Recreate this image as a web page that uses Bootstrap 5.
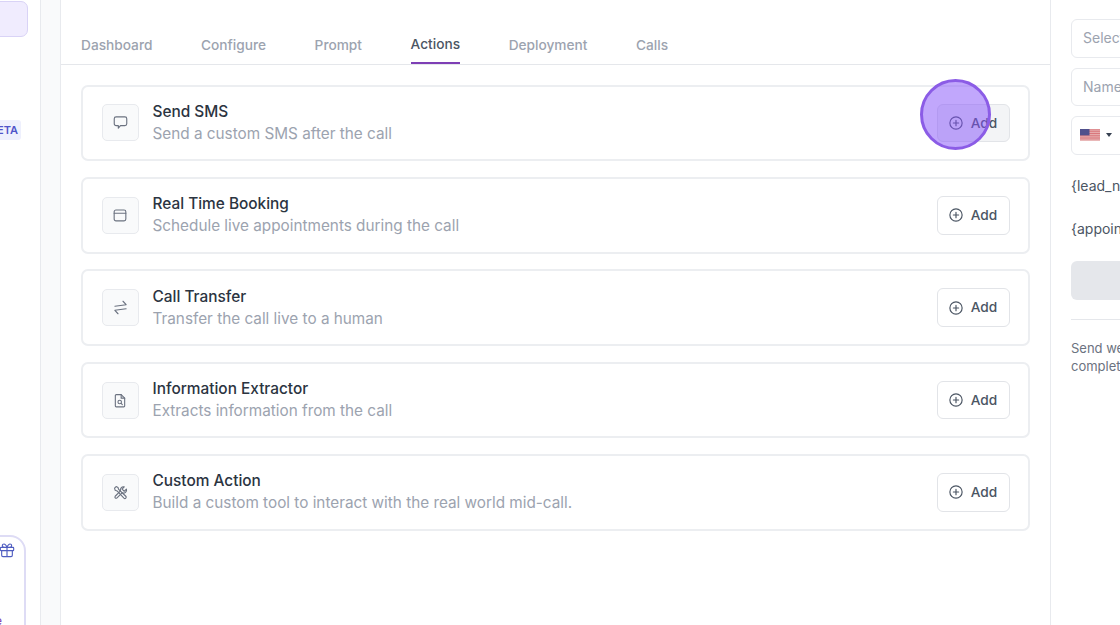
<!DOCTYPE html>
<html lang="en">
<head>
<meta charset="utf-8">
<title>Actions</title>
<link href="https://cdn.jsdelivr.net/npm/bootstrap@5.3.0/dist/css/bootstrap.min.css" rel="stylesheet">
<style>
html,body{height:625px;overflow:hidden;background:#fff}
body{font-family:Inter,"Liberation Sans",sans-serif;color:#374151}
.shell{height:625px;width:1120px;position:relative;overflow:hidden}
.side{width:41px;border-right:1px solid #e8eaee;overflow:hidden;flex:none}
.side-inner{width:200px;margin-left:-160px;height:625px}
.side-sel{height:36px;margin:1px 12px 0 0;background:#f0ecfe;border:1px solid #d9d3f6;border-radius:7px}
.side-beta{margin:83px 19px 0 0;background:#eef0fd;color:#4f55c9;font-size:11px;font-weight:600;line-height:20px;padding:0 3px;border-radius:3px;align-self:flex-end}
.side-gift{height:120px;margin:auto 14px -30px 0;border:2px solid #dedcf5;border-radius:16px;padding:4px 10px;position:relative;font-size:11px;line-height:14px;color:#374151;text-align:right}
.side-gift svg{display:block;margin-left:auto;margin-right:-1px;margin-top:1px}
.side-note{margin:0 14px 0 0}
.side-link{color:#7e3fb5;margin:42px 12px 0 0;font-size:12px}
.strip{width:20px;flex:none;background:#f9fafb;border-right:1px solid #e8eaee}
.main-col{width:989px;flex:none}
.tabbar{height:65px;border-bottom:1px solid #e5e7eb;padding:0 0 0 20px;gap:48.6px;align-items:flex-end}
.tab-item{color:#9ca3af;font-size:13.7px;font-weight:500;line-height:20px;padding:0 0 9px;height:30px;margin-bottom:-0.5px;text-decoration:none}
.tab-item.now{color:#4b5563;border-bottom:2px solid #7e3fb5;margin-bottom:0}
.acts{padding:19.6px 20px 0;gap:15.8px}
.act{height:76.6px;border:2px solid #eceef1;border-radius:7px;padding:0 18.500px;flex-direction:row;align-items:center;box-shadow:none}
.act-icon{width:37px;height:37px;background:#f9fafb;border:1px solid #e8eaee;border-radius:5px;margin-right:14px;flex:none}
.act-title{font-size:15.4px;font-weight:500;line-height:22px;color:#2b3441}
.act-sub{font-size:15.3px;line-height:22px;color:#9ca3af}
.add-btn{width:73px;height:38.5px;border:1px solid #e2e4e8;border-radius:6px;font-size:13.7px;font-weight:500;color:#4b5563;background:#fff;padding:0;gap:8px}
.add-btn.hov{background:#f3f4f6}
.panel{width:80px;flex:none;border-left:1px solid #e8eaee;padding:19px 0 0 20px;overflow:hidden}
.pinner{width:300px}
.pfield{height:38.6px;border:1px solid #e8eaee;border-radius:6px;margin-bottom:10px;padding:0 0 0 11px;font-size:14px;color:#9ca3af;line-height:1;gap:6px}
.pfield.phone{padding-left:8px}
.ptok{font-size:14px;color:#4b5563;line-height:20px;margin-top:21px}
.ptok.second{margin-top:23px}
.pbtn{height:39px;background:#e5e7eb;border-radius:6px;margin-top:22px}
.prule{border-top:1px solid #e5e7eb;margin-top:19px}
.pnote{font-size:13px;line-height:18px;color:#6b7280;margin-top:19px}
.cursor-dot{position:absolute;left:919.5px;top:78.5px;width:71px;height:71px;border-radius:50%;background:rgba(132,80,250,.5);border:3px solid #8b5ce6}
</style>
</head>
<body>
<div class="shell d-flex">
  <aside class="side">
    <div class="side-inner d-flex flex-column">
      <div class="side-sel"></div>
      <div class="side-beta">BETA</div>
      <div class="side-gift">
        <svg width="16" height="16" viewBox="0 0 24 24" fill="none" stroke="#4f5dc0" stroke-width="1.7" stroke-linecap="round" stroke-linejoin="round"><rect x="2" y="8" width="20" height="5" rx="1"/><path d="M12 8v14M20 13v7a2 2 0 0 1-2 2H6a2 2 0 0 1-2-2v-7M7.500 8a2.500 2.500 0 0 1 0-5C10 3 12 8 12 8s2-5 4.500-5a2.500 2.500 0 0 1 0 5"/></svg>
        <div class="side-note">r</div>
        <div class="side-link">e</div>
      </div>
    </div>
  </aside>
  <div class="strip"></div>
  <main class="main-col">
    <nav class="nav tabbar">
      <a class="tab-item" href="#">Dashboard</a>
      <a class="tab-item" href="#">Configure</a>
      <a class="tab-item" href="#">Prompt</a>
      <a class="tab-item now" href="#">Actions</a>
      <a class="tab-item" href="#">Deployment</a>
      <a class="tab-item" href="#">Calls</a>
    </nav>
    <div class="acts d-flex flex-column">
      <div class="card act">
        <div class="act-icon d-flex align-items-center justify-content-center">
          <svg width="15" height="15" viewBox="0 0 24 24" fill="none" stroke="#6b7280" stroke-width="1.8" stroke-linecap="round" stroke-linejoin="round"><path d="M5 3h14a3 3 0 0 1 3 3v8a3 3 0 0 1-3 3h-7l-3.500 4v-4H5a3 3 0 0 1-3-3V6a3 3 0 0 1 3-3z"/></svg>
        </div>
        <div class="flex-grow-1"><div class="act-title">Send SMS</div><div class="act-sub">Send a custom SMS after the call</div></div>
        <button class="btn add-btn hov d-flex align-items-center justify-content-center" type="button"><svg width="14" height="14" viewBox="0 0 24 24" fill="none" stroke="#4b5563" stroke-width="2" stroke-linecap="round"><circle cx="12" cy="12" r="10.500"/><path d="M12 7.500v9M7.500 12h9"/></svg>Add</button>
      </div>
      <div class="card act">
        <div class="act-icon d-flex align-items-center justify-content-center">
          <svg width="14" height="14" viewBox="0 0 24 24" fill="none" stroke="#6b7280" stroke-width="1.9" stroke-linecap="round" stroke-linejoin="round"><rect x="2" y="3.500" width="20" height="18.500" rx="3"/><path d="M2 9h20"/></svg>
        </div>
        <div class="flex-grow-1"><div class="act-title">Real Time Booking</div><div class="act-sub">Schedule live appointments during the call</div></div>
        <button class="btn add-btn d-flex align-items-center justify-content-center" type="button"><svg width="14" height="14" viewBox="0 0 24 24" fill="none" stroke="#4b5563" stroke-width="2" stroke-linecap="round"><circle cx="12" cy="12" r="10.500"/><path d="M12 7.500v9M7.500 12h9"/></svg>Add</button>
      </div>
      <div class="card act">
        <div class="act-icon d-flex align-items-center justify-content-center">
          <svg width="15" height="15" viewBox="0 0 24 24" fill="none" stroke="#6b7280" stroke-width="1.8" stroke-linecap="round" stroke-linejoin="round"><path d="M3 10 21 7.500 16 2M21 14 3 16.500 8 22"/></svg>
        </div>
        <div class="flex-grow-1"><div class="act-title">Call Transfer</div><div class="act-sub">Transfer the call live to a human</div></div>
        <button class="btn add-btn d-flex align-items-center justify-content-center" type="button"><svg width="14" height="14" viewBox="0 0 24 24" fill="none" stroke="#4b5563" stroke-width="2" stroke-linecap="round"><circle cx="12" cy="12" r="10.500"/><path d="M12 7.500v9M7.500 12h9"/></svg>Add</button>
      </div>
      <div class="card act">
        <div class="act-icon d-flex align-items-center justify-content-center">
          <svg width="14" height="15" viewBox="0 0 24 24" fill="none" stroke="#6b7280" stroke-width="1.9" stroke-linecap="round" stroke-linejoin="round"><path d="M4 3.500A1.500 1.500 0 0 1 5.500 2H14l6 6v13.500a1.500 1.500 0 0 1-1.500 1.500h-13A1.500 1.500 0 0 1 4 21.500z"/><path d="M14 2v6h6"/><circle cx="11.500" cy="14.500" r="3"/><path d="m14 17 2 2"/></svg>
        </div>
        <div class="flex-grow-1"><div class="act-title">Information Extractor</div><div class="act-sub">Extracts information from the call</div></div>
        <button class="btn add-btn d-flex align-items-center justify-content-center" type="button"><svg width="14" height="14" viewBox="0 0 24 24" fill="none" stroke="#4b5563" stroke-width="2" stroke-linecap="round"><circle cx="12" cy="12" r="10.500"/><path d="M12 7.500v9M7.500 12h9"/></svg>Add</button>
      </div>
      <div class="card act">
        <div class="act-icon d-flex align-items-center justify-content-center">
          <svg width="15" height="15" viewBox="0 0 24 24" fill="none" stroke="#6b7280" stroke-width="1.8" stroke-linecap="round" stroke-linejoin="round"><path d="M2.500 5 5 2.500l3 1.500 1 3 11.500 11a2 2 0 0 1-3 3L6.500 9.500l-3-1z"/><path d="M21.500 6.500 18 10l-3.500-3.500L18 3a5 5 0 0 0-6 6.500L3.500 18a2 2 0 0 0 2.500 3l8.500-8.500a5 5 0 0 0 7-6z"/></svg>
        </div>
        <div class="flex-grow-1"><div class="act-title">Custom Action</div><div class="act-sub">Build a custom tool to interact with the real world mid-call.</div></div>
        <button class="btn add-btn d-flex align-items-center justify-content-center" type="button"><svg width="14" height="14" viewBox="0 0 24 24" fill="none" stroke="#4b5563" stroke-width="2" stroke-linecap="round"><circle cx="12" cy="12" r="10.500"/><path d="M12 7.500v9M7.500 12h9"/></svg>Add</button>
      </div>
    </div>
  </main>
  <aside class="panel">
    <div class="pinner">
      <div class="pfield d-flex align-items-center">Select</div>
      <div class="pfield d-flex align-items-center">Name</div>
      <div class="pfield phone d-flex align-items-center">
        <svg width="20" height="12" viewBox="0 0 20 12"><rect width="20" height="12" fill="#e9b8b8"/><path d="M0 .9h20M0 2.700h20M0 4.500h20M0 6.300h20M0 8.100h20M0 9.900h20" stroke="#d9777c" stroke-width="1"/><rect width="9.500" height="6.400" fill="#51518c"/></svg>
        <svg width="6" height="4" viewBox="0 0 6 4"><path d="M0 0h6L3 4z" fill="#374151"/></svg>
      </div>
      <div class="ptok">{lead_name}</div>
      <div class="ptok second">{appointment_time}</div>
      <div class="pbtn"></div>
      <div class="prule"></div>
      <div class="pnote">Send welcome message when call is<br>completed</div>
    </div>
  </aside>
  <div class="cursor-dot"></div>
</div>
<script src="https://cdn.jsdelivr.net/npm/bootstrap@5.3.0/dist/js/bootstrap.bundle.min.js"></script>
</body>
</html>
